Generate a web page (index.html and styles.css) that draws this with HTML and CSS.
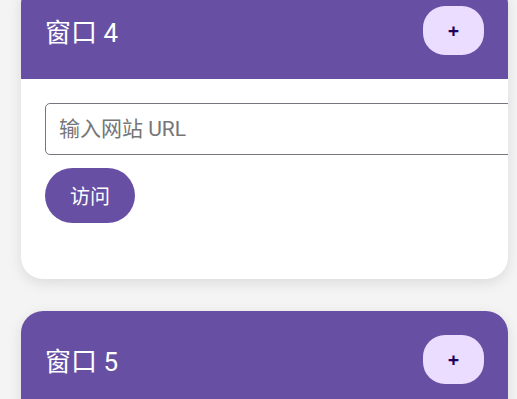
FILE: index.html
```html
<!DOCTYPE html>
<html lang="zh-CN">
<head>
  <meta charset="UTF-8" />
  <meta name="viewport" content="width=device-width, initial-scale=1.0" />
  <title>多窗口浏览</title>
  <link rel="stylesheet" href="styles.css">
</head>
<body>
  <div class="window-list">
    <div class="window-card">
      <div class="window-header">
        <span class="window-title">窗口 4</span>
        <button class="add-btn">+</button>
      </div>
      <div class="window-body">
        <input class="url-input" placeholder="输入网站 URL" />
        <button class="visit-btn">访问</button>
      </div>
    </div>

    <div class="window-card">
      <div class="window-header">
        <span class="window-title">窗口 5</span>
        <button class="add-btn">+</button>
      </div>
      <div class="window-body">
        <input class="url-input" placeholder="输入网站 URL" />
        <button class="visit-btn">访问</button>
      </div>
    </div>
  </div>
</body>
</html>
```

FILE: styles.css
```css
body {
  margin: 0;
  padding: 0;
  font-family: Roboto, "Noto Sans CJK SC", sans-serif;
  background-color: #f4f4f4;
  overflow: hidden;
}

.window-list {
  display: flex;
  flex-direction: column;
  gap: 32px;
  width: 487px;
  margin-left: 21px;
  margin-top: -18px;
}

.window-card {
  background: #fff;
  border-radius: 22px;
  box-shadow: 0 4px 14px rgba(0, 0, 0, 0.1);
  overflow: hidden;
}

.window-header {
  display: flex;
  align-items: center;
  justify-content: space-between;
  height: 97px;
  padding: 0 24px;
  background-color: #6750a4;
}

.window-title {
  color: #fff;
  font-size: 26px;
}

.add-btn {
  width: 61px;
  height: 49px;
  border: none;
  border-radius: 22px;
  background: #eaddff;
  color: #21005d;
  font-family: "Noto Sans", sans-serif;
  font-size: 20px;
  font-weight: bold;
  cursor: pointer;
}

.window-body {
  display: flex;
  flex-direction: column;
  align-items: flex-start;
  gap: 13px;
  padding: 24px 24px 56px;
}

.url-input {
  width: 100%;
  height: 50px;
  padding: 0 13px;
  border: 1px solid #79747e;
  border-radius: 5px;
  font-family: inherit;
  font-size: 21px;
  color: #1c1b1f;
  outline: none;
}

.url-input::placeholder {
  color: #767676;
}

.visit-btn {
  height: 55px;
  padding: 0 25px;
  border: none;
  border-radius: 28px;
  background-color: #6750a4;
  color: #fff;
  font-family: inherit;
  font-size: 20px;
  cursor: pointer;
}
```
